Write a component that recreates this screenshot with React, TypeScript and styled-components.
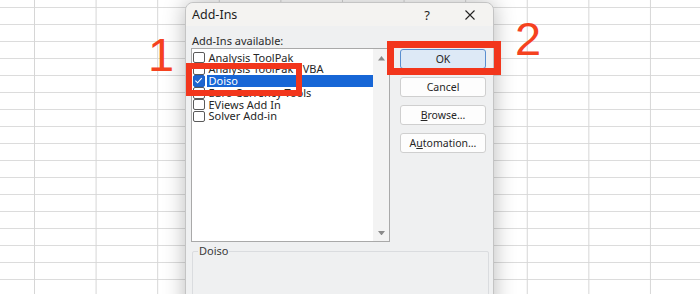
import React from 'react'
import styled, { createGlobalStyle } from 'styled-components'

const GlobalStyle = createGlobalStyle`
  html, body {
    margin: 0;
    padding: 0;
    background: #fff;
  }
  body {
    font-family: 'Noto Sans', 'Open Sans', sans-serif;
  }
`

const addIns = [
  { name: 'Analysis ToolPak', checked: false },
  { name: 'Analysis ToolPak - VBA', checked: false },
  { name: 'Doiso', checked: true, selected: true },
  { name: 'Euro Currency Tools', checked: false },
  { name: 'EViews Add In', checked: false },
  { name: 'Solver Add-in', checked: false },
]

export default function App() {
  return (
    <Sheet>
      <GlobalStyle />

      <Dialog>
        <TitleBar>
          <Title>Add-Ins</Title>
          <Help>?</Help>
          <CloseIcon viewBox="0 0 10 10">
            <path d="M0.5 0.5 L9.5 9.5 M9.5 0.5 L0.5 9.5" />
          </CloseIcon>
        </TitleBar>

        <Body>
          <FieldLabel>Add-Ins available:</FieldLabel>

          <MainRow>
            <ListBox>
              <Rows>
                {addIns.map((item) => (
                  <Row key={item.name}>
                    <Check checked={item.checked}>
                      {item.checked && (
                        <svg viewBox="0 0 10 10" width="9" height="9">
                          <path d="M1.5 5.2 L4 7.6 L8.6 2.4" fill="none" stroke="#fff" strokeWidth="1.2" />
                        </svg>
                      )}
                    </Check>
                    <RowText selected={item.selected}>{item.name}</RowText>
                  </Row>
                ))}
              </Rows>
              <ScrollBar>
                <Arrow viewBox="0 0 8 5">
                  <path d="M0 5 L4 0 L8 5 Z" />
                </Arrow>
                <Arrow viewBox="0 0 8 5">
                  <path d="M0 0 L8 0 L4 5 Z" />
                </Arrow>
              </ScrollBar>
            </ListBox>

            <ButtonColumn>
              <DialogButton primary>OK</DialogButton>
              <DialogButton>Cancel</DialogButton>
              <DialogButton>
                <u>B</u>rowse...
              </DialogButton>
              <DialogButton>
                A<u>u</u>tomation...
              </DialogButton>
            </ButtonColumn>
          </MainRow>

          <GroupBox>
            <Legend>Doiso</Legend>
          </GroupBox>
        </Body>
      </Dialog>

      {/* annotation overlays */}
      <Highlight style={{ left: 186, top: 63, width: 116, height: 33 }} thick={6} />
      <Highlight style={{ left: 387, top: 41, width: 114, height: 34 }} thick={7} />
      <StepNumber style={{ left: 148, top: 29 }}>1</StepNumber>
      <StepNumber style={{ left: 515, top: 13 }}>2</StepNumber>
    </Sheet>
  )
}

const Sheet = styled.div`
  position: relative;
  width: 700px;
  height: 294px;
  overflow: hidden;
  background-color: #fff;
  background-image: linear-gradient(to right, #d6d6d6 1px, transparent 1px),
    linear-gradient(to bottom, #dcdcdc 1.5px, transparent 1.5px);
  background-size: 61.6px 17px;
  background-position: 34px 7px;
`

const Dialog = styled.div`
  position: absolute;
  left: 185px;
  top: 2px;
  width: 309px;
  height: 330px;
  box-sizing: border-box;
  border: 1px solid #c4c4c4;
  border-radius: 8px;
  background: #eff0f1;
  box-shadow: 0 0 22px rgba(0, 0, 0, 0.28);
  display: flex;
  flex-direction: column;
`

const TitleBar = styled.div`
  flex-shrink: 0;
  height: 23px;
  display: flex;
  align-items: center;
  padding-left: 6px;
  background: #f4f3f1;
  border-radius: 8px 8px 0 0;
  color: #1e1e1e;
`

const Title = styled.span`
  font-size: 12.5px;
  flex: 1;
`

const Help = styled.span`
  font-size: 13px;
  width: 14px;
  margin-right: 31px;
  text-align: center;
`

const CloseIcon = styled.svg`
  width: 10px;
  height: 10px;
  margin-right: 18px;
  stroke: #222;
  stroke-width: 1.1;
  fill: none;
`

const Body = styled.div`
  padding: 7px 0 0 5px;
  display: flex;
  flex-direction: column;
`

const FieldLabel = styled.div`
  font-size: 11px;
  line-height: 15px;
  height: 15px;
  padding-left: 1px;
  color: #2b2b2b;
`

const MainRow = styled.div`
  display: flex;
  align-items: flex-start;
`

const ListBox = styled.div`
  width: 199px;
  height: 194px;
  box-sizing: border-box;
  border: 1px solid #a9a9a9;
  background: #fff;
  display: flex;
`

const Rows = styled.div`
  flex: 1;
  padding-top: 2.5px;
  display: flex;
  flex-direction: column;
`

const Row = styled.div`
  height: 11.8px;
  display: flex;
  align-items: center;
`

const Check = styled.span<{ checked: boolean }>`
  width: 11.5px;
  height: 11.5px;
  box-sizing: border-box;
  margin-left: 1px;
  margin-right: 2px;
  border: 1px solid ${(p) => (p.checked ? '#1d5fc2' : '#5a5a5a')};
  border-radius: 2px;
  background: ${(p) => (p.checked ? '#1f66cf' : '#fff')};
  display: flex;
  align-items: center;
  justify-content: center;
`

const RowText = styled.span<{ selected?: boolean }>`
  flex: 1;
  height: 11.8px;
  line-height: 11.8px;
  font-size: 11px;
  padding-left: 2px;
  color: ${(p) => (p.selected ? '#fff' : '#262626')};
  background: ${(p) => (p.selected ? '#1766d6' : 'transparent')};
  white-space: nowrap;
`

const ScrollBar = styled.div`
  width: 16px;
  background: #f3f3f3;
  display: flex;
  flex-direction: column;
  justify-content: space-between;
  align-items: center;
  padding: 7px 0 6px;
  box-sizing: border-box;
`

const Arrow = styled.svg`
  width: 7px;
  height: 4.5px;
  fill: #8a8a8a;
`

const ButtonColumn = styled.div`
  margin-left: 10px;
  margin-top: 1px;
  display: flex;
  flex-direction: column;
  gap: 8px;
`

const DialogButton = styled.div<{ primary?: boolean }>`
  width: 86px;
  height: 20px;
  box-sizing: border-box;
  border: 1px solid ${(p) => (p.primary ? '#5a8fd0' : '#cfcfcf')};
  border-radius: 3px;
  background: ${(p) => (p.primary ? '#dde9f6' : '#fdfdfd')};
  font-size: 10.5px;
  color: #262626;
  display: flex;
  align-items: center;
  justify-content: center;
`

const GroupBox = styled.div`
  position: relative;
  margin-top: 9px;
  margin-left: 1px;
  width: 295px;
  height: 60px;
  border: 1px solid #dadcdf;
  border-radius: 2px;
`

const Legend = styled.span`
  position: absolute;
  left: 5px;
  top: -8px;
  font-size: 11px;
  line-height: 14px;
  color: #3a3a3a;
  background: #eff0f1;
  padding: 0 1px;
`

const Highlight = styled.div<{ thick: number }>`
  position: absolute;
  box-sizing: border-box;
  border: ${(p) => p.thick}px solid #f2361c;
`

const StepNumber = styled.span`
  position: absolute;
  font-family: 'Liberation Sans', Arial, sans-serif;
  font-size: 47px;
  line-height: 52px;
  color: #f5421f;
`
